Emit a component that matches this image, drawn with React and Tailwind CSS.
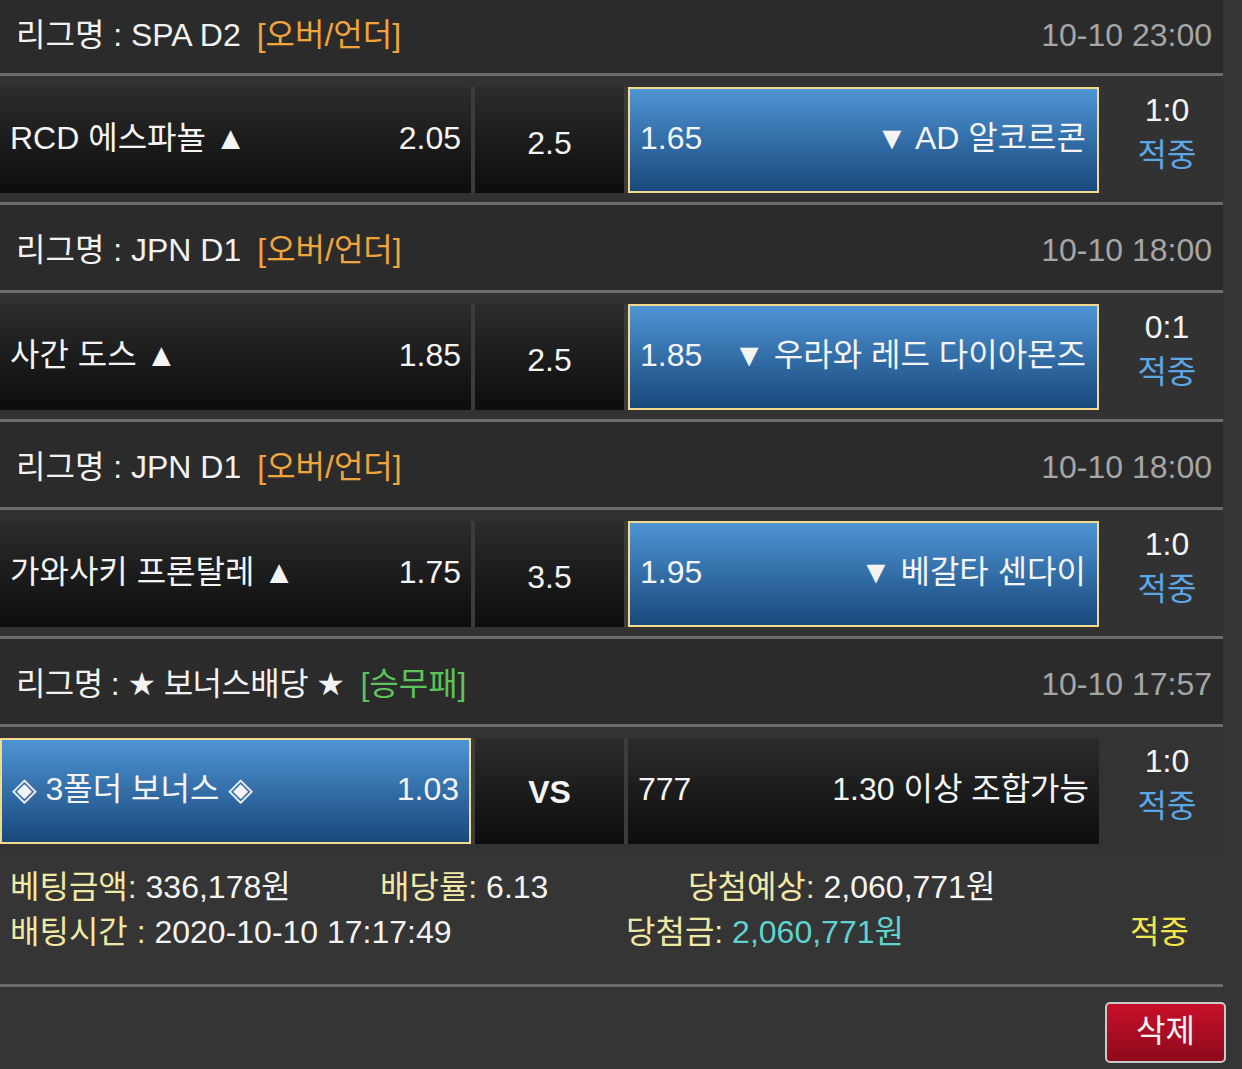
import React from 'react';

const font = "font-['Liberation_Sans','DejaVu_Sans','Noto_Sans_CJK_KR',sans-serif]";

const bets = [
    {
        league: 'SPA D2',
        tag: '[오버/언더]',
        tagColor: 'text-[#f0a43c]',
        date: '10-10 23:00',
        first: true,
        home: 'RCD 에스파뇰 ▲',
        homeOdds: '2.05',
        line: '2.5',
        awayOdds: '1.65',
        away: '▼ AD 알코르콘',
        score: '1:0',
    },
    {
        league: 'JPN D1',
        tag: '[오버/언더]',
        tagColor: 'text-[#f0a43c]',
        date: '10-10 18:00',
        home: '사간 도스 ▲',
        homeOdds: '1.85',
        line: '2.5',
        awayOdds: '1.85',
        away: '▼ 우라와 레드 다이아몬즈',
        score: '0:1',
    },
    {
        league: 'JPN D1',
        tag: '[오버/언더]',
        tagColor: 'text-[#f0a43c]',
        date: '10-10 18:00',
        home: '가와사키 프론탈레 ▲',
        homeOdds: '1.75',
        line: '3.5',
        awayOdds: '1.95',
        away: '▼ 베갈타 센다이',
        score: '1:0',
    },
];

function LeagueHeader({ league, tag, tagColor, date, first, tight }) {
    return (
        <div className={`flex items-center justify-between bg-[#2b2b2b] pl-[16px] pr-[11px] ${first ? 'h-[73px] pb-[3px]' : 'h-[85px] pt-[4px]'}`}>
            <div className="flex items-center gap-[16px]">
                <span className={`text-[#f2f2f2] ${tight ? 'tracking-[-0.6px]' : ''}`}>리그명 : {league}</span>
                <span className={tagColor}>{tag}</span>
            </div>
            <span className="text-[#a6a6a6]">{date}</span>
        </div>
    );
}

function Divider() {
    return <div className="h-[3px] bg-[#6c6c6c]" />;
}

function Cell({ selected, className = '', children }) {
    const look = selected
        ? 'border-2 border-[#f3da8c] bg-gradient-to-b from-[#4e95d5] to-[#19497c]'
        : 'bg-gradient-to-b from-[#2c2c2c] to-[#0d0d0d]';
    return <div className={`h-full flex items-center ${look} ${className}`}>{children}</div>;
}

function Score({ score }) {
    return (
        <div className="flex-1 flex flex-col items-center justify-center pl-[12px] pb-[14px] leading-[45px]">
            <span className="text-[#f4f4f4]">{score}</span>
            <span className="text-[#5da6e4]">적중</span>
        </div>
    );
}

function MatchRow({ bet }) {
    return (
        <div className="flex h-[126px] bg-[#323232] pt-[11px] pb-[9px]">
            <Cell className="w-[471px] justify-between pl-[10px] pr-[10px] pb-[4px] text-[#f4f4f4]">
                <span>{bet.home}</span>
                <span>{bet.homeOdds}</span>
            </Cell>
            <div className="w-[4px] h-full bg-[#3c3c3c]" />
            <Cell className="w-[149px] justify-center pt-[6px] text-[#f4f4f4]">{bet.line}</Cell>
            <div className="w-[4px] h-full bg-[#3c3c3c]" />
            <Cell selected className="w-[471px] justify-between pl-[10px] pr-[11px] pb-[4px] text-[#f4f4f4]">
                <span>{bet.awayOdds}</span>
                <span>{bet.away}</span>
            </Cell>
            <Score score={bet.score} />
        </div>
    );
}

function BonusRow() {
    return (
        <div className="flex h-[126px] bg-[#333333] pt-[11px] pb-[9px]">
            <Cell selected className="w-[471px] justify-between pl-[10px] pr-[10px] pb-[4px] text-[#f4f4f4]">
                <span>◈ 3폴더 보너스 ◈</span>
                <span>1.03</span>
            </Cell>
            <div className="w-[4px] h-full bg-[#3c3c3c]" />
            <Cell className="w-[149px] justify-center pt-[2px] font-bold text-[#f4f4f4]">VS</Cell>
            <div className="w-[4px] h-full bg-[#3c3c3c]" />
            <Cell className="w-[471px] justify-between pl-[10px] pr-[10px] pb-[4px] text-[#f4f4f4]">
                <span>777</span>
                <span>1.30 이상 조합가능</span>
            </Cell>
            <Score score="1:0" />
        </div>
    );
}

function SlipSummary() {
    return (
        <div className="h-[131px] bg-[#353535] pt-[12px] pl-[10px] leading-[45px]">
            <div className="flex">
                <span className="w-[370px]">
                    <span className="text-[#f1e8a6]">베팅금액:</span> <span className="text-[#f4f4f4]">336,178원</span>
                </span>
                <span className="w-[308px]">
                    <span className="text-[#f1e8a6]">배당률:</span> <span className="text-[#f4f4f4]">6.13</span>
                </span>
                <span>
                    <span className="text-[#f1e8a6]">당첨예상:</span> <span className="text-[#f4f4f4]">2,060,771원</span>
                </span>
            </div>
            <div className="flex">
                <span className="w-[616px]">
                    <span className="text-[#f1e8a6]">배팅시간 :</span> <span className="text-[#f4f4f4]">2020-10-10 17:17:49</span>
                </span>
                <span className="w-[504px]">
                    <span className="text-[#f1e8a6]">당첨금:</span> <span className="text-[#5fd3cf]">2,060,771원</span>
                </span>
                <span className="text-[#f3e64a]">적중</span>
            </div>
        </div>
    );
}

export default function App() {
    return (
        <div className={`w-[1242px] h-[1069px] overflow-hidden bg-[#353535] text-[32px] ${font}`}>
            <div className="flex">
                <div className="w-[1223px]">
                    {bets.map((bet, i) => (
                        <div key={i}>
                            <LeagueHeader {...bet} />
                            <Divider />
                            <MatchRow bet={bet} />
                            <Divider />
                        </div>
                    ))}
                    <LeagueHeader tight league="★ 보너스배당 ★" tag="[승무패]" tagColor="text-[#5cc35a]" date="10-10 17:57" />
                    <Divider />
                    <BonusRow />
                    <SlipSummary />
                    <Divider />
                </div>
                <div className="flex-1" />
            </div>
            <div className="flex justify-end pt-[15px] pr-[16px]">
                <button className="w-[121px] h-[61px] rounded-[5px] border-2 border-[#c9c9c9] bg-gradient-to-b from-[#c8102a] to-[#8e0a1c] pb-[4px] text-[#f4f4f4]">
                    삭제
                </button>
            </div>
        </div>
    );
}
